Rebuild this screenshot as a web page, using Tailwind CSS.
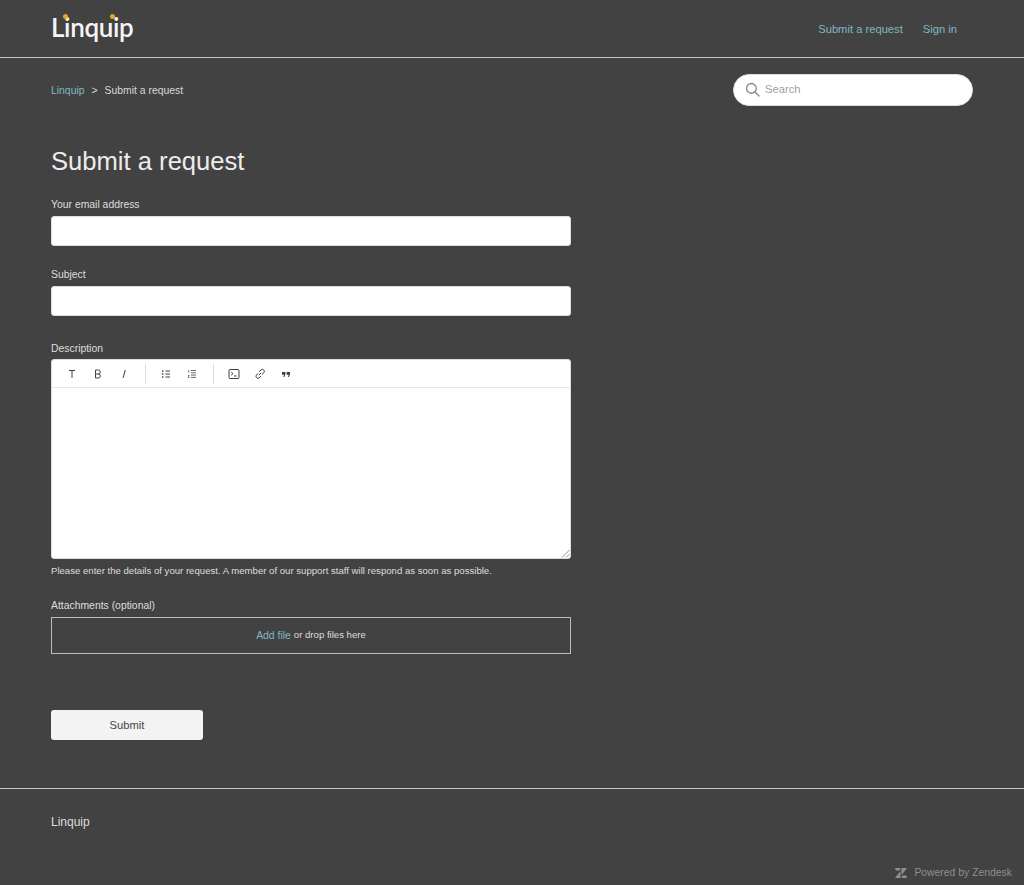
<!DOCTYPE html>
<html lang="en">
<head>
<meta charset="utf-8">
<title>Submit a request</title>
<script src="https://cdn.jsdelivr.net/npm/@tailwindcss/browser@4"></script>
</head>
<body class="bg-[#424242] font-['Liberation_Sans',Arial,sans-serif] text-[#dedede] h-[885px] overflow-hidden flex flex-col">
<header class="h-[58px] shrink-0 border-b border-[#c4c4c4] pl-[51px] pr-[67px] flex items-center justify-between">
  <a class="relative block font-['Lato',sans-serif] text-[26px] leading-none font-semibold tracking-[-0.35px] text-[#f5f5f5] -mt-[4px]">Linquip
    <span class="absolute left-[12px] top-[0px] w-[5px] h-[5px] rounded-full bg-[#e5a823]"></span>
    <span class="absolute left-[59px] top-[0px] w-[5px] h-[5px] rounded-full bg-[#e5a823]"></span>
  </a>
  <nav class="flex gap-[20px] text-[11.2px] text-[#7fb8c4] mt-[2px]">
    <a>Submit a request</a>
    <a>Sign in</a>
  </nav>
</header>
<main class="pl-[51px] pr-[51px] flex-1">
  <div class="flex items-center justify-between pt-[16px]">
    <div class="flex items-center text-[10.4px] text-[#d8d8d8] pt-[2px]">
      <a class="text-[#7fb8c4]">Linquip</a><span class="mx-[7px]">&gt;</span><span>Submit a request</span>
    </div>
    <div class="w-[240px] h-[32px] bg-white rounded-full border border-[#ddd] flex items-center pl-[11px] gap-[5px] text-[11.2px] text-[#a0a0a0]">
      <svg class="w-[15px] h-[15px] mb-[2px]" viewBox="0 0 16 16" fill="none" stroke="#8a8a8a" stroke-width="1.4"><circle cx="6.8" cy="6.8" r="5.2"/><path d="M10.6 10.6 15 15" stroke-linecap="round"/></svg>
      <span class="pb-[2px]">Search</span>
    </div>
  </div>
  <h1 class="text-[25.6px] leading-[32px] font-normal text-[#ececec] mt-[39px]">Submit a request</h1>
  <form class="w-[520px]">
    <label class="block text-[10.4px] leading-[12px] mt-[22px]">Your email address</label>
    <div class="h-[30px] mt-[5px] bg-white rounded-[3px] border border-[#ddd]"></div>
    <label class="block text-[10.4px] leading-[12px] mt-[23px]">Subject</label>
    <div class="h-[30px] mt-[5px] bg-white rounded-[3px] border border-[#ddd]"></div>
    <label class="block text-[10.4px] leading-[12px] mt-[27px]">Description</label>
    <div class="relative h-[200px] mt-[4px] bg-white rounded-[3px] border border-[#ddd] overflow-hidden">
      <div class="h-[28px] border-b border-[#e8e8e8] flex items-center text-[#222]">
        <div class="flex items-center pl-[12px] pr-[13px] gap-[10px] h-[20px] border-r border-[#ddd]">
          <svg class="w-[16px] h-[16px]" viewBox="0 0 16 16" fill="none" stroke="#3a4249" stroke-width="1"><path d="M5 4.5h6M8 4.5v7.5"/></svg>
          <svg class="w-[16px] h-[16px]" viewBox="0 0 16 16" fill="none" stroke="#3a4249" stroke-width="1"><path d="M5.5 4v8M5.5 4h2.8a2 2 0 0 1 0 4H5.5M8.3 8a2 2 0 0 1 0 4H5.5"/></svg>
          <svg class="w-[16px] h-[16px]" viewBox="0 0 16 16" fill="none" stroke="#3a4249" stroke-width="1"><path d="M9.3 4 7 12"/></svg>
        </div>
        <div class="flex items-center pl-[12px] pr-[13px] gap-[10px] h-[20px] border-r border-[#ddd]">
          <svg class="w-[16px] h-[16px]" viewBox="0 0 16 16" fill="none" stroke="#3a4249" stroke-width="1"><path d="M7.5 5h4.5M7.5 8h4.5M7.5 11h4.5"/><path d="M4 5h1.4M4 8h1.4M4 11h1.4" stroke-width="1.6"/></svg>
          <svg class="w-[16px] h-[16px]" viewBox="0 0 16 16" fill="none" stroke="#3a4249" stroke-width=".8"><path d="M7 4.5h5M7 6.8h5M7 9.1h5M7 11.4h5"/><path d="M4.7 4v2.5M4 9.5h1.2L4 11.5h1.4" stroke-width=".7"/></svg>
        </div>
        <div class="flex items-center pl-[12px] gap-[10px] h-[20px]">
          <svg class="w-[16px] h-[16px]" viewBox="0 0 16 16" fill="none" stroke="#3a4249" stroke-width="1"><rect x="3" y="3.5" width="10" height="9" rx="1"/><path d="M5.2 6l1.8 1.6-1.8 1.6M8 10h2.5"/></svg>
          <svg class="w-[16px] h-[16px]" viewBox="0 0 16 16" fill="none" stroke="#3a4249" stroke-width="1"><path d="M6.8 9.2 9.2 6.8M6.3 7.2 4.4 9.1a2 2 0 0 0 2.8 2.8L9 10M7 5.9l1.9-1.9a2 2 0 0 1 2.9 2.8L9.9 8.7"/></svg>
          <svg class="w-[16px] h-[16px]" viewBox="0 0 16 16" fill="#3a4249"><path d="M4 6h3.4v2.6L6.2 11H5.2l.9-2.2H4zM8.6 6H12v2.6L10.8 11H9.8l.9-2.2H8.6z"/></svg>
        </div>
      </div>
      <svg class="absolute right-0 bottom-0 w-[9px] h-[9px]" viewBox="0 0 9 9" fill="none" stroke="#777" stroke-width=".8"><path d="M1 8.5 8.5 1M5 8.5 8.5 5"/></svg>
    </div>
    <p class="text-[9.6px] leading-[12px] mt-[6px]">Please enter the details of your request. A member of our support staff will respond as soon as possible.</p>
    <label class="block text-[10.4px] leading-[12px] mt-[23px]">Attachments (optional)</label>
    <div class="h-[37px] mt-[5px] border border-[#bdbdbd] flex items-center justify-center text-[9.6px]">
      <a class="text-[#7fb8c4] text-[10.4px]">Add file</a><span class="ml-[3px]">or drop files here</span>
    </div>
    <button type="button" class="block w-[152px] h-[30px] mt-[56px] bg-[#f3f3f3] rounded-[3px] text-[11.2px] text-[#444]">Submit</button>
  </form>
</main>
<footer class="shrink-0 h-[97px] border-t border-[#c4c4c4] relative pl-[51px]">
  <p class="text-[12px] leading-[14px] pt-[26px]">Linquip</p>
  <div class="absolute right-[12px] bottom-[4px] flex items-center gap-[7px] text-[10.4px] text-[#8e8e8e]">
    <svg class="w-[12px] h-[10px]" viewBox="0 0 12 10" fill="#8e8e8e"><path d="M5.5 2.7V10H0zM5.5 0a2.75 2.75 0 0 1-5.5 0zM6.5 7.3V0H12zM6.5 10a2.75 2.75 0 0 1 5.5 0z"/></svg>
    <span>Powered by Zendesk</span>
  </div>
</footer>
</body>
</html>
